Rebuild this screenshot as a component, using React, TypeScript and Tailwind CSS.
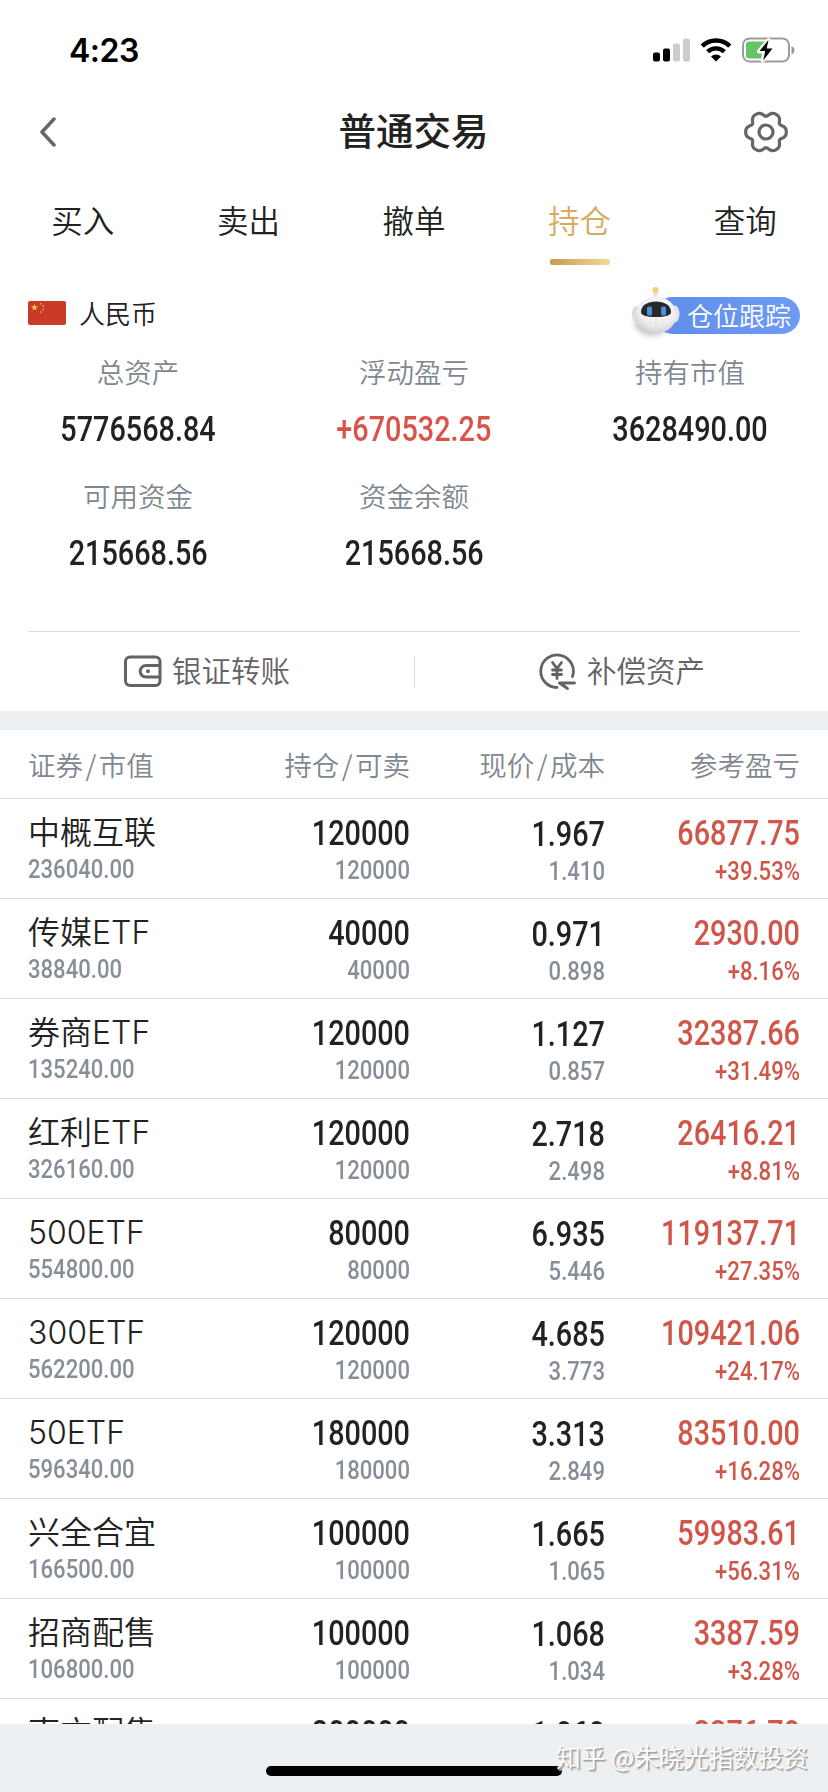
import { Fragment } from 'react'
import clsx from 'clsx'

interface Holding {
  name: string
  value: string
  amount: string
  sellable: string
  price: string
  cost: string
  profit: string
  rate: string
}

const tabs = ['买入', '卖出', '撤单', '持仓', '查询']

const columns = ['证券/市值', '持仓/可卖', '现价/成本', '参考盈亏']

const summary = [
  { label: '总资产', value: '5776568.84' },
  { label: '浮动盈亏', value: '+670532.25', red: true },
  { label: '持有市值', value: '3628490.00' },
  { label: '可用资金', value: '215668.56' },
  { label: '资金余额', value: '215668.56' }
]

const holdings: Holding[] = [
  { name: '中概互联', value: '236040.00', amount: '120000', sellable: '120000', price: '1.967', cost: '1.410', profit: '66877.75', rate: '+39.53%' },
  { name: '传媒ETF', value: '38840.00', amount: '40000', sellable: '40000', price: '0.971', cost: '0.898', profit: '2930.00', rate: '+8.16%' },
  { name: '券商ETF', value: '135240.00', amount: '120000', sellable: '120000', price: '1.127', cost: '0.857', profit: '32387.66', rate: '+31.49%' },
  { name: '红利ETF', value: '326160.00', amount: '120000', sellable: '120000', price: '2.718', cost: '2.498', profit: '26416.21', rate: '+8.81%' },
  { name: '500ETF', value: '554800.00', amount: '80000', sellable: '80000', price: '6.935', cost: '5.446', profit: '119137.71', rate: '+27.35%' },
  { name: '300ETF', value: '562200.00', amount: '120000', sellable: '120000', price: '4.685', cost: '3.773', profit: '109421.06', rate: '+24.17%' },
  { name: '50ETF', value: '596340.00', amount: '180000', sellable: '180000', price: '3.313', cost: '2.849', profit: '83510.00', rate: '+16.28%' },
  { name: '兴全合宜', value: '166500.00', amount: '100000', sellable: '100000', price: '1.665', cost: '1.065', profit: '59983.61', rate: '+56.31%' },
  { name: '招商配售', value: '106800.00', amount: '100000', sellable: '100000', price: '1.068', cost: '1.034', profit: '3387.59', rate: '+3.28%' },
  { name: '南方配售', value: '212000.00', amount: '200000', sellable: '200000', price: '1.060', cost: '1.044', profit: '3376.70', rate: '+1.62%' }
]

function StatusBar() {
  return (
    <div className="flex h-[100px] items-center justify-between pl-[69px] pr-[33px]">
      <span className="pt-[1px] font-['Inter',sans-serif] text-[32px] leading-[40px] font-semibold tracking-[-0.500px] text-black">4:23</span>
      <div className="flex items-center">
        <svg width="38" height="24" viewBox="0 0 38 24">
          <rect x="0" y="14.5" width="7" height="9" rx="2" fill="#000" />
          <rect x="10" y="10.500" width="7" height="13" rx="2" fill="#000" />
          <rect x="20" y="5.500" width="7" height="18" rx="2" fill="#ccc" />
          <rect x="30" y="0.500" width="7" height="23" rx="2" fill="#ccc" />
        </svg>
        <svg className="ml-[9px]" width="32" height="24" viewBox="0 0 32 24">
          <path d="M2.200 8.200a19.600 19.600 0 0 1 27.600 0" fill="none" stroke="#000" strokeWidth="4.600" />
          <path d="M7.700 13.800a11.800 11.800 0 0 1 16.600 0" fill="none" stroke="#000" strokeWidth="4.400" />
          <path d="M16 23.500l-5-5a7.200 7.200 0 0 1 10 0z" fill="#000" />
        </svg>
        <svg className="ml-[10px]" width="53" height="27" viewBox="0 0 53 27">
          <rect x="1" y="1.500" width="46" height="23" rx="6.500" fill="#fff" stroke="#9b9b9b" strokeWidth="2" />
          <path d="M7 4.500h18v17H7a3 3 0 0 1-3-3v-11a3 3 0 0 1 3-3z" fill="#65c466" />
          <path d="M49.500 9v8.500c2-.8 3-2.400 3-4.250S51.500 9.800 49.500 9z" fill="#9b9b9b" />
          <path d="M26.500 3L17 14.500h5.700l-2 9L31 11.500h-5.800z" fill="#fff" stroke="#fff" strokeWidth="4" strokeLinejoin="round" />
          <path d="M26.500 3L17.500 14h5.700l-2 9.500L30.500 11.500h-5.800z" fill="#000" />
        </svg>
      </div>
    </div>
  )
}

function RobotIcon() {
  return (
    <svg className="absolute -left-[24px] -top-[11px]" width="52" height="58" viewBox="0 0 52 58">
      <defs>
        <radialGradient id="head" cx="0.55" cy="0.3" r="0.75">
          <stop offset="0" stopColor="#fdfdfd" />
          <stop offset="0.65" stopColor="#ececee" />
          <stop offset="1" stopColor="#c9c9cc" />
        </radialGradient>
        <filter id="shade" x="-50%" y="-50%" width="200%" height="200%">
          <feGaussianBlur stdDeviation="2.500" />
        </filter>
      </defs>
      <ellipse cx="22" cy="36" rx="18" ry="14" fill="#9a9aa0" opacity="0.5" filter="url(#shade)" />
      <rect x="23.500" y="4" width="4" height="9" fill="#e4e2dd" />
      <circle cx="25.500" cy="4" r="3" fill="#f3cf75" />
      <ellipse cx="6.500" cy="28" rx="4.500" ry="8" fill="#dcdcdf" />
      <ellipse cx="45" cy="28" rx="4.500" ry="8.500" fill="#e3e4e9" />
      <ellipse cx="26" cy="29" rx="20.500" ry="18.500" fill="url(#head)" />
      <path d="M26 32v14" stroke="#dededf" strokeWidth="1" />
      <path d="M11 26c0-7 7-10.500 15-10.500S41 19 41 26c0 3.500-5 5-15 5s-15-1.500-15-5z" fill="#26282c" />
      <rect x="17" y="20.500" width="5" height="9" rx="1.500" fill="#4d8fd2" />
      <rect x="31" y="20.500" width="5" height="9" rx="1.500" fill="#4d8fd2" />
    </svg>
  )
}

function WalletIcon() {
  return (
    <svg width="38" height="34" viewBox="0 0 38 34" fill="none" stroke="#636363" strokeWidth="3">
      <rect x="1.500" y="2" width="34.500" height="28.500" rx="4.500" />
      <path d="M36 10.500H22a5.800 5.800 0 0 0 0 11.600h14" />
      <circle cx="24" cy="16.300" r="2" fill="#636363" stroke="none" />
    </svg>
  )
}

function YuanIcon() {
  return (
    <svg width="38" height="38" viewBox="0 0 38 38" fill="none" stroke="#636363" strokeWidth="2.800" strokeLinecap="round" strokeLinejoin="round">
      <path d="M18 34.500A16.300 16.300 0 1 1 33.500 23.500" />
      <path d="M13.500 9.500l4.500 6 4.500-6M18 15.500v10M13.500 17h9M13.500 21.500h9" />
      <path d="M35.500 30H20.500l8 5.500" />
    </svg>
  )
}

// 六瓣齿轮轮廓
const gearPoints = Array.from({ length: 120 }, (_, i) => {
  const t = (i * Math.PI) / 60
  const r = 18.5 + 2.3 * Math.cos(6 * t) - 0.5 * Math.cos(12 * t)
  return `${(23 + r * Math.cos(t)).toFixed(2)},${(22 + r * Math.sin(t)).toFixed(2)}`
}).join(' ')

function GearIcon() {
  return (
    <svg width="46" height="44" viewBox="0 0 46 44" fill="none" stroke="#666" strokeWidth="3.200" strokeLinejoin="round">
      <polygon points={gearPoints} />
      <circle cx="23" cy="22" r="7" />
    </svg>
  )
}

function FlagIcon() {
  return (
    <svg width="38" height="24" viewBox="0 0 38 24">
      <rect width="38" height="24" rx="2" fill="#c93a27" />
      <path d="M6.500 2.800l.9 2.500h2.600L7.900 6.900l.8 2.600-2.200-1.600-2.200 1.600.8-2.600L3 5.300h2.600z" fill="#f8d04e" />
      <g fill="#eda541">
        <circle cx="13" cy="2.800" r="0.900" />
        <circle cx="15.300" cy="5" r="0.900" />
        <circle cx="15.300" cy="8.300" r="0.900" />
        <circle cx="13" cy="11" r="0.900" />
      </g>
    </svg>
  )
}

// 主数字
function Num({ children, className }: { children: string; className?: string }) {
  return (
    <div className={clsx("scale-x-[0.835] font-['Roboto',sans-serif] text-[34.500px] leading-[36px] font-medium whitespace-nowrap", className)}>
      {children}
    </div>
  )
}

// 次要数字
function SubNum({ children, className }: { children: string; className?: string }) {
  return (
    <div className={clsx("scale-x-[0.850] font-['Roboto',sans-serif] text-[26px] leading-[28px] font-medium whitespace-nowrap", className)}>
      {children}
    </div>
  )
}

function ColumnTitle({ text }: { text: string }) {
  return (
    <span className="first:text-left">
      {text.split('/').map((part, i) => (
        <Fragment key={part}>
          {i > 0 && <span className="mx-[2.500px]">/</span>}
          {part}
        </Fragment>
      ))}
    </span>
  )
}

function HoldingRow({ item }: { item: Holding }) {
  return (
    <div className="grid h-[100px] shrink-0 grid-cols-[190px_192px_195px_195px] border-b border-[#dcdcdc] px-7 pt-[15px]">
      <div>
        <div className="font-['Inter','Noto_Sans_CJK_SC',sans-serif] text-[32px] leading-[38px] font-[350] whitespace-nowrap">{item.name}</div>
        <SubNum className="mt-[3px] origin-left text-[#868e98]">{item.value}</SubNum>
      </div>
      <div className="pt-[1px] text-right">
        <Num className="origin-right">{item.amount}</Num>
        <SubNum className="mt-[5px] origin-right text-[#868e98]">{item.sellable}</SubNum>
      </div>
      <div className="pt-[2px] text-right">
        <Num className="origin-right">{item.price}</Num>
        <SubNum className="mt-[5px] origin-right text-[#868e98]">{item.cost}</SubNum>
      </div>
      <div className="pt-[1px] text-right text-[#d0564a]">
        <Num className="origin-right">{item.profit}</Num>
        <SubNum className="mt-[6px] origin-right">{item.rate}</SubNum>
      </div>
    </div>
  )
}

export default function App() {
  return (
    <div className="flex h-[1792px] w-[828px] flex-col overflow-hidden bg-white font-['Noto_Sans_CJK_SC',sans-serif] font-[350] text-[#222]">
      <StatusBar />

      {/* 标题栏 */}
      <header className="flex h-[64px] items-center justify-between pr-[39px] pl-[38px]">
        <svg width="46" height="30" viewBox="0 0 46 30" fill="none" stroke="#666" strokeWidth="3.500" strokeLinecap="round" strokeLinejoin="round">
          <path d="M16 2L4 15l12 13" />
        </svg>
        <h1 className="pb-[7px] text-[37.500px] leading-[48px] font-medium">普通交易</h1>
        <GearIcon />
      </header>

      {/* 交易标签 */}
      <nav className="grid h-[114px] grid-cols-5 pt-[33px]">
        {tabs.map(tab => (
          <div key={tab} className={clsx('flex flex-col items-center text-[31.500px] leading-[44px]', tab === '持仓' && 'text-[#d7ac62]')}>
            {tab}
            {tab === '持仓' && <div className="mt-[18px] h-[6px] w-[60px] rounded-[2px] bg-linear-to-r from-[#c69c50] to-[#f5da97]" />}
          </div>
        ))}
      </nav>

      {/* 币种 */}
      <div className="flex h-[74px] items-center justify-between px-7 pb-[4px]">
        <div className="flex items-center gap-[13px] text-[26px] leading-[36px]">
          <FlagIcon />
          <span className="-mt-[1px]">人民币</span>
        </div>
        <div className="relative mt-[4px] h-[37px] w-[146px] rounded-full bg-linear-to-r from-[#5f8de8] to-[#6d9bf6] pl-[33px] text-[26px] leading-[35px] whitespace-nowrap text-white">
          仓位跟踪
          <RobotIcon />
        </div>
      </div>

      {/* 资产汇总 */}
      <section className="grid h-[279px] grid-cols-3 content-start">
        {summary.map(item => (
          <div key={item.label} className="flex h-[124px] flex-col items-center">
            <span className="-mt-[1px] text-[27.500px] leading-[40px] text-[#7f8790]">{item.label}</span>
            <Num className={clsx('mt-[20px]', item.red && 'text-[#d9534a]')}>{item.value}</Num>
          </div>
        ))}
      </section>

      <div className="mx-7 grid h-[80px] grid-cols-2 border-t border-[#dcdcdc] text-[29.500px] leading-[40px] text-[#636363]">
        <div className="flex items-center justify-center gap-[10px] pr-[28px]">
          <WalletIcon />
          <span className="-mt-[5px]">银证转账</span>
        </div>
        <div className="relative flex items-center justify-center gap-[10px] pl-[30px]">
          <i className="absolute top-[24px] left-0 h-[32px] w-px bg-[#dcdcdc]" />
          <YuanIcon />
          <span className="-mt-[5px]">补偿资产</span>
        </div>
      </div>

      {/* 持仓列表 */}
      <section className="flex min-h-0 flex-1 flex-col overflow-hidden border-t-[19px] border-[#edf0f3]">
        <div className="grid h-[69px] shrink-0 grid-cols-[190px_192px_195px_195px] items-center border-b border-[#dcdcdc] px-7 text-right text-[27.500px] leading-[40px] text-[#7f8790]">
          {columns.map(col => (
            <ColumnTitle key={col} text={col} />
          ))}
        </div>
        {holdings.map(item => (
          <HoldingRow key={item.name} item={item} />
        ))}
      </section>

      <footer className="relative flex h-[68px] shrink-0 justify-center bg-[#edf0f3] pt-[42px]">
        <div className="h-[10px] w-[296px] rounded-full bg-black" />
        <span className="absolute top-[14px] right-[20px] text-[24.800px] leading-[36px] whitespace-nowrap text-white [text-shadow:1px_1px_1px_#999,2px_2px_1px_#bbb]">知乎 @朱晓光指数投资</span>
      </footer>
    </div>
  )
}
